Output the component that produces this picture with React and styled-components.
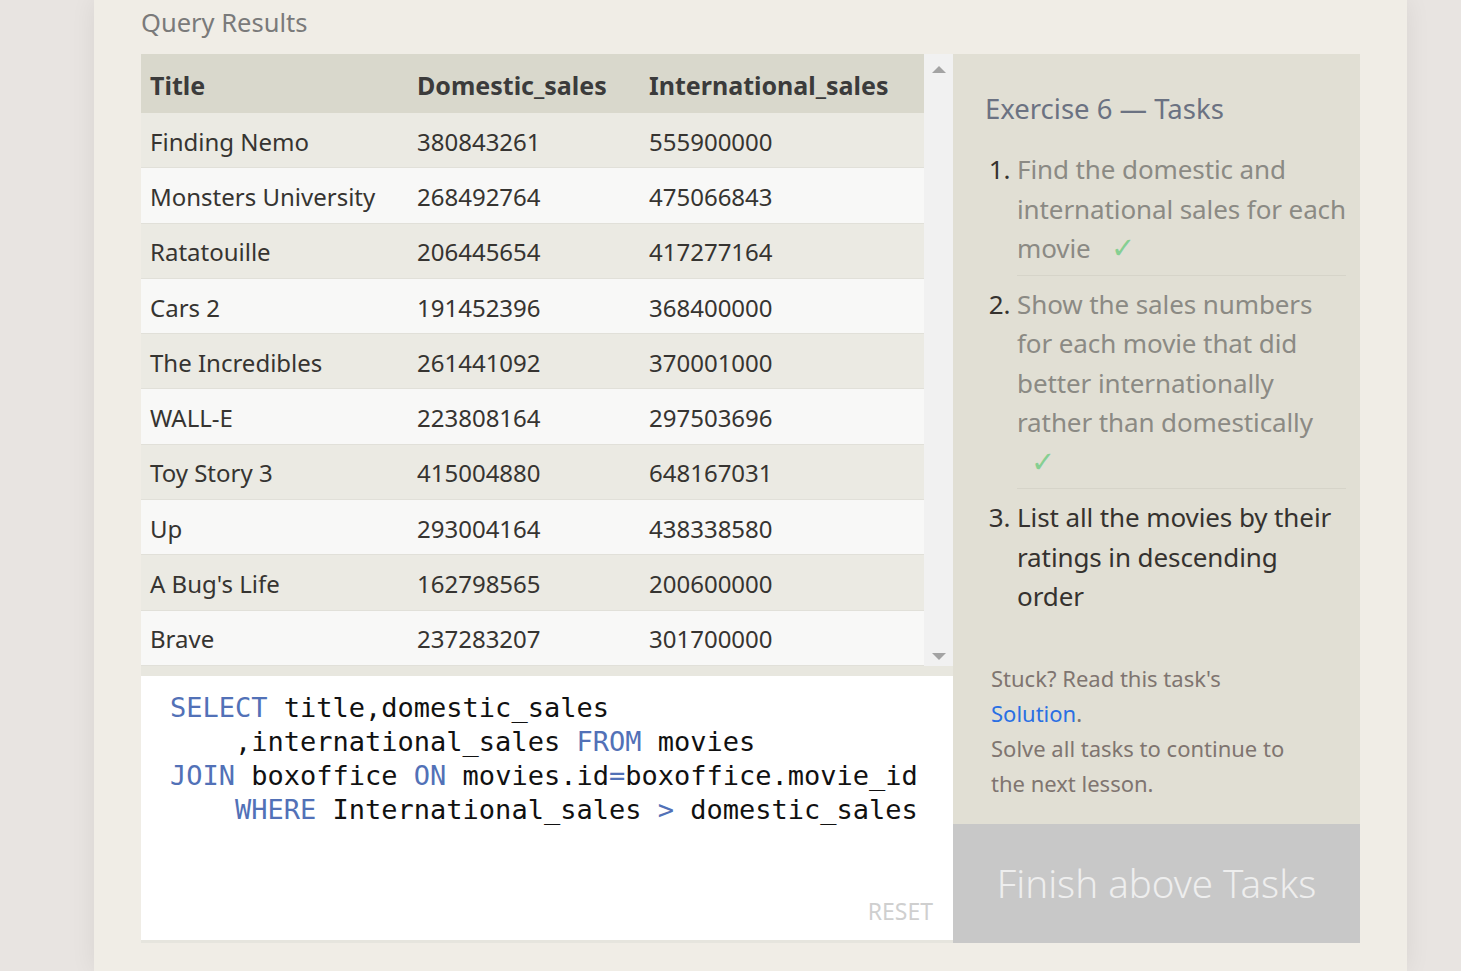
import React from 'react';
import styled, { createGlobalStyle } from 'styled-components';

const GlobalStyle = createGlobalStyle`
    html, body {
        margin: 0;
        padding: 0;
        background: #e8e4e1;
        font-family: "Noto Sans", "Open Sans", sans-serif;
    }
`

const Page = styled.div`
    display: flex;
    padding-left: 94px;
    min-height: 100vh;
`
const Main = styled.main`
    width: 1313px;
    min-height: 971px;
    box-sizing: border-box;
    padding: 5px 47px 0 47px;
    background: #f0ede6;
    box-shadow: 0 0 24px rgba(0, 0, 0, 0.07);
`
const Heading = styled.h2`
    margin: 0 0 15px 0;
    font-size: 25.5px;
    font-weight: 400;
    line-height: 34px;
    color: #7a7a7a;
`
const Row = styled.div`
    display: flex;
    align-items: stretch;
`
const LeftCol = styled.div`
    width: 812px;
    display: flex;
    flex-direction: column;
`
const TableBox = styled.div`
    display: flex;
    background: #e8e7df;
    padding-bottom: 10px;
`
const Table = styled.div`
    flex: 1;
    display: flex;
    flex-direction: column;
`
const TRow = styled.div`
    display: grid;
    grid-template-columns: 267px 232px 1fr;
    align-items: center;
    height: ${p => (p.$head ? '59px' : '55.3px')};
    box-sizing: border-box;
    background: ${p => (p.$head ? '#d9d8cc' : p.$odd ? '#ebeae3' : '#f8f8f7')};
    border-bottom: ${p => (p.$head ? 'none' : '1px solid #e1e0d9')};
`
const Cell = styled.div`
    padding: 2px 0 0 9px;
    font-size: ${p => (p.$head ? '25px' : '24px')};
    font-weight: ${p => (p.$head ? 700 : 400)};
    color: ${p => (p.$head ? '#3b3b3b' : '#363431')};
    white-space: nowrap;
`
const Scrollbar = styled.div`
    width: 29px;
    background: #f1f1f1;
    display: flex;
    flex-direction: column;
    justify-content: space-between;
    align-items: center;
    padding: 12px 0 6px 0;
`
const Arrow = styled.div`
    width: 0;
    height: 0;
    border-left: 7px solid transparent;
    border-right: 7px solid transparent;
    ${p => (p.$down ? 'border-top: 7px solid #a3a3a3;' : 'border-bottom: 7px solid #a3a3a3;')}
`
const Editor = styled.div`
    position: relative;
    height: 267px;
    box-sizing: border-box;
    background: #ffffff;
    border-bottom: 3px solid #e6e5de;
    padding: 15px 0 0 29px;
`
const Code = styled.pre`
    margin: 0;
    font-family: "DejaVu Sans Mono", "Liberation Mono", monospace;
    font-size: 27px;
    line-height: 34px;
    color: #111111;
`
const Kw = styled.span`
    color: #5271b7;
`
const Reset = styled.div`
    position: absolute;
    right: 20px;
    bottom: 13px;
    font-size: 23px;
    color: #cfcfcf;
`
const Panel = styled.aside`
    width: 407px;
    background: #e1dfd4;
    display: flex;
    flex-direction: column;
`
const PanelBody = styled.div`
    padding: 36px 10px 0 32px;
`
const PanelTitle = styled.h3`
    margin: 0 0 22px 0;
    font-size: 27.5px;
    font-weight: 400;
    line-height: 38px;
    color: #6b7282;
`
const TaskList = styled.ol`
    margin: 0;
    padding: 0 0 0 32px;
    list-style: decimal;
`
const Task = styled.li`
    font-size: 26px;
    line-height: 39.5px;
    letter-spacing: -0.1px;
    color: ${p => (p.$done ? '#8b8a84' : '#35322f')};
    padding-bottom: ${p => (p.$last ? '0' : '6px')};
    margin-bottom: ${p => (p.$last ? '0' : '9px')};
    margin-right: 4px;
    border-bottom: ${p => (p.$last ? 'none' : '1px solid #d6d4c9')};

    &::marker {
        color: #35322f;
    }
`
const Check = styled.span`
    display: inline-block;
    margin-left: 14px;
    font-size: 29px;
    line-height: 26px;
    color: #86cf92;
`
const Help = styled.div`
    margin: 44px 0 0 6px;
    max-width: 312px;
    font-size: 22px;
    line-height: 35px;
    color: #7f7570;
`
const Link = styled.a`
    color: #2a6fe3;
    text-decoration: none;
`
const FinishButton = styled.div`
    margin-top: auto;
    height: 119px;
    background: #c8c8c8;
    display: flex;
    align-items: center;
    justify-content: center;
    font-size: 38.5px;
    font-weight: 300;
    color: #eeeeee;
`

const movies = [
    ['Finding Nemo', 380843261, 555900000],
    ['Monsters University', 268492764, 475066843],
    ['Ratatouille', 206445654, 417277164],
    ['Cars 2', 191452396, 368400000],
    ['The Incredibles', 261441092, 370001000],
    ['WALL-E', 223808164, 297503696],
    ['Toy Story 3', 415004880, 648167031],
    ['Up', 293004164, 438338580],
    ["A Bug's Life", 162798565, 200600000],
    ['Brave', 237283207, 301700000],
];

function App() {
    return (
        <>
            <GlobalStyle />
            <Page>
                <Main>
                    <Heading>Query Results</Heading>
                    <Row>
                        <LeftCol>
                            <TableBox>
                                <Table>
                                    <TRow $head>
                                        <Cell $head>Title</Cell>
                                        <Cell $head>Domestic_sales</Cell>
                                        <Cell $head>International_sales</Cell>
                                    </TRow>
                                    {movies.map((m, i) => (
                                        <TRow key={m[0]} $odd={i % 2 === 0}>
                                            <Cell>{m[0]}</Cell>
                                            <Cell>{m[1]}</Cell>
                                            <Cell>{m[2]}</Cell>
                                        </TRow>
                                    ))}
                                </Table>
                                <Scrollbar>
                                    <Arrow />
                                    <Arrow $down />
                                </Scrollbar>
                            </TableBox>
                            <Editor>
                                <Code>
                                    <Kw>SELECT</Kw> title,domestic_sales{'\n'}
                                    {'    '},international_sales <Kw>FROM</Kw> movies{'\n'}
                                    <Kw>JOIN</Kw> boxoffice <Kw>ON</Kw> movies.id<Kw>=</Kw>boxoffice.movie_id{'\n'}
                                    {'    '}<Kw>WHERE</Kw> International_sales <Kw>&gt;</Kw> domestic_sales
                                </Code>
                                <Reset>RESET</Reset>
                            </Editor>
                        </LeftCol>
                        <Panel>
                            <PanelBody>
                                <PanelTitle>Exercise 6 — Tasks</PanelTitle>
                                <TaskList>
                                    <Task $done>
                                        Find the domestic and international sales for each movie <Check>✓</Check>
                                    </Task>
                                    <Task $done>
                                        Show the sales numbers for each movie that did better internationally rather than domestically <Check>✓</Check>
                                    </Task>
                                    <Task $last>
                                        List all the movies by their ratings in descending order
                                    </Task>
                                </TaskList>
                                <Help>
                                    Stuck? Read this task's<br />
                                    <Link href="#">Solution</Link>.<br />
                                    Solve all tasks to continue to the next lesson.
                                </Help>
                            </PanelBody>
                            <FinishButton>Finish above Tasks</FinishButton>
                        </Panel>
                    </Row>
                </Main>
            </Page>
        </>
    )
}

export default App
